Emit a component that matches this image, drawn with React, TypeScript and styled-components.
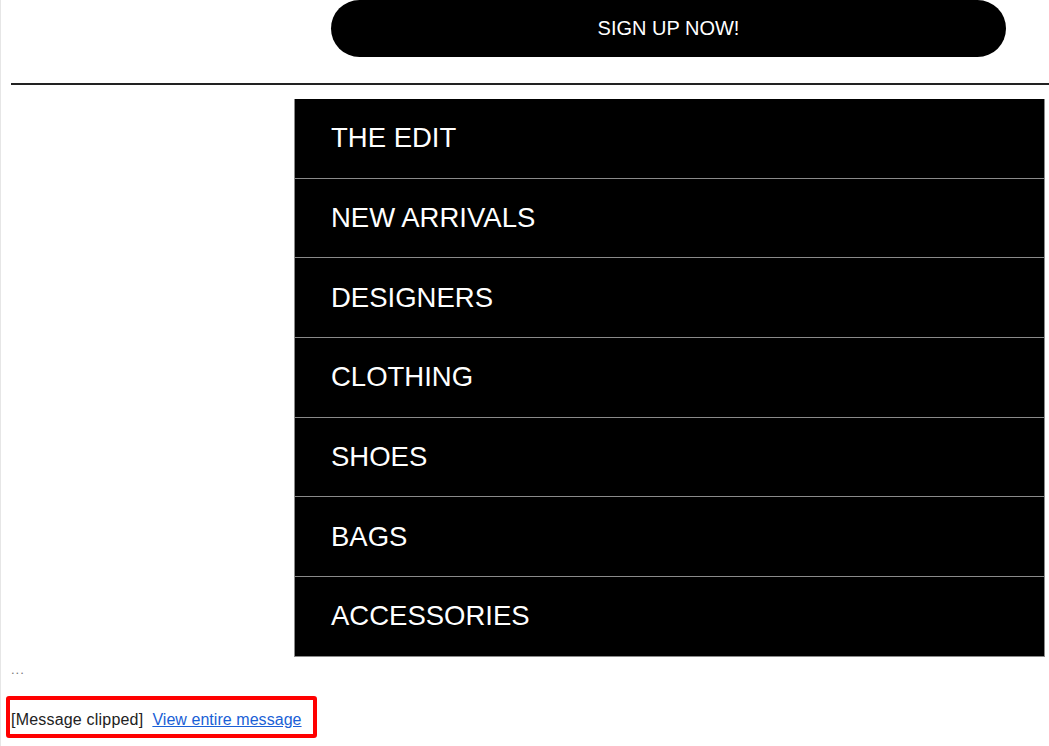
import React from "react";
import styled, { createGlobalStyle } from "styled-components";

const Global = createGlobalStyle`
  html, body { margin: 0; padding: 0; background: #fff; }
  body { font-family: Arial, "Liberation Sans", sans-serif; }
`;

const Page = styled.div`
  width: 1049px;
  height: 746px;
  box-sizing: border-box;
  border-left: 1px solid #e6e6e6;
  padding-left: 10px;
  overflow: hidden;
  display: flex;
  flex-direction: column;
`;

const ButtonRow = styled.div`
  display: flex;
  padding-left: 320px;
`;

const SignUp = styled.a`
  width: 675px;
  height: 57px;
  border-radius: 29px;
  background: #000;
  color: #fff;
  font-size: 20px;
  display: flex;
  align-items: center;
  justify-content: center;
  text-decoration: none;
`;

const Rule = styled.hr`
  margin: 26px 0 0 0;
  border: none;
  height: 2px;
  background: #222;
  width: 100%;
`;

const Menu = styled.nav`
  margin: 14px 0 0 283px;
  width: 751px;
  box-sizing: border-box;
  background: #000;
  border-left: 1px solid #8a8a8a;
  border-right: 1px solid #8a8a8a;
  display: flex;
  flex-direction: column;
`;

const MenuItem = styled.a`
  height: 78.7px;
  border-bottom: 1px solid #8a8a8a;
  display: flex;
  align-items: center;
  padding-left: 36px;
  color: #fff;
  font-size: 27.5px;
  text-decoration: none;
`;

const Dots = styled.div`
  margin-top: 5px;
  color: #777;
  font-size: 13px;
  line-height: 16px;
  letter-spacing: 1px;
`;

const ClipBox = styled.div`
  margin: 18px 0 0 -5px;
  width: 311px;
  height: 42px;
  box-sizing: border-box;
  border: 4px solid #ff0000;
  border-radius: 3px;
  display: flex;
  align-items: center;
  padding: 6px 0 0 1px;
  font-size: 16px;
  letter-spacing: 0.2px;
  color: #222;
`;

const Link = styled.a`
  color: #1a5fd6;
  margin-left: 9px;
  letter-spacing: 0.05px;
  text-decoration: underline;
`;

const items = [
  "THE EDIT",
  "NEW ARRIVALS",
  "DESIGNERS",
  "CLOTHING",
  "SHOES",
  "BAGS",
  "ACCESSORIES",
];

export default function App() {
  return (
    <>
      <Global />
      <Page>
        <ButtonRow>
          <SignUp href="#">SIGN UP NOW!</SignUp>
        </ButtonRow>
        <Rule />
        <Menu>
          {items.map((t) => (
            <MenuItem key={t} href="#">
              {t}
            </MenuItem>
          ))}
        </Menu>
        <Dots>...</Dots>
        <ClipBox>
          <span>[Message clipped]</span>
          <Link href="#">View entire message</Link>
        </ClipBox>
      </Page>
    </>
  );
}
